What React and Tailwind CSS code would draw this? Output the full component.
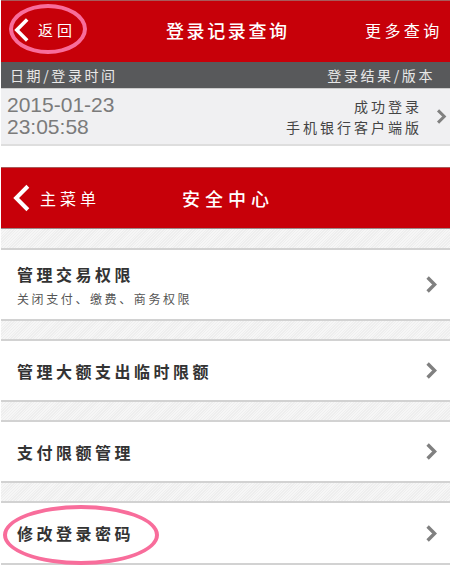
const stripe =
  "border-b-2 border-[#d2d2d2] bg-[repeating-linear-gradient(135deg,#f6f6f6_0px,#f6f6f6_1px,#eeeeee_1px,#eeeeee_2px)]";

function BackArrow({ className }) {
  return (
    <svg viewBox="0 0 20 30" className={className} fill="none" stroke="#fff" strokeWidth="4.5">
      <path d="M16.5 2 L3.5 15 L16.5 28" />
    </svg>
  );
}

function Arrow({ className }) {
  return (
    <svg viewBox="0 0 11 17" className={`w-[11px] shrink-0 ${className}`} fill="none" stroke="#808080" strokeWidth="3.4">
      <path d="M1.6 1.5 L8.6 8.5 L1.6 15.5" />
    </svg>
  );
}

function MenuRow({ title, sub, height }) {
  return (
    <div className={`${height} flex items-center justify-between pl-[16px] pr-[13px] bg-white border-b-2 border-[#d2d2d2]`}>
      <div>
        <p className="text-[16px] leading-[22px] font-bold tracking-[3.5px] text-[#333]">{title}</p>
        {sub && <p className="text-[12px] leading-[16px] mt-[6px] tracking-[2.6px] text-[#555]">{sub}</p>}
      </div>
      <Arrow className="h-[17px]" />
    </div>
  );
}

export default function App() {
  return (
    <div
      className="relative w-[450px] h-[566px] overflow-hidden bg-white pl-[1px]"
      style={{ fontFamily: '"Noto Sans CJK SC", "Liberation Sans", sans-serif' }}
    >
      <header className="h-[62px] pb-[3px] bg-[#c70009] border-t border-[#a85a5a] flex items-center text-white">
        <BackArrow className="w-[16px] h-[28px] ml-[13px] shrink-0" />
        <span className="ml-[8px] w-[52px] text-[15px] tracking-[4px] whitespace-nowrap">返回</span>
        <h1 className="ml-[76px] w-[132px] text-[18px] font-medium tracking-[2.6px] whitespace-nowrap">登录记录查询</h1>
        <span className="ml-[67px] text-[16px] tracking-[3.4px] whitespace-nowrap">更多查询</span>
      </header>

      <div className="h-[27px] bg-[#58595b] text-[#e8e8e8] text-[14px] tracking-[2.6px] flex items-center justify-between pl-[9px] pr-[15px] border-b border-[#ccc]">
        <span>日期/登录时间</span>
        <span>登录结果/版本</span>
      </div>

      <div className="h-[57px] bg-[#f0f0f2] border-b-2 border-[#dedede] flex items-center justify-between pl-[6px] pr-[3px]">
        <div className="text-[#7b7b7b] text-[21px] leading-[22px] -mt-[1px]" style={{ fontFamily: '"Liberation Sans", sans-serif' }}>
          <p>2015-01-23</p>
          <p>23:05:58</p>
        </div>
        <div className="flex items-center gap-[17px]">
          <div className="text-right text-[#444] text-[14px] leading-[21px] tracking-[3px] -mr-[3px]">
            <p>成功登录</p>
            <p>手机银行客户端版</p>
          </div>
          <Arrow className="h-[15px]" />
        </div>
      </div>

      <div className="h-[21px] bg-white" />

      <header className="h-[62px] bg-[#c70009] border-t border-[#a85a5a] border-b border-b-[#9a8a8a] flex items-center text-white">
        <BackArrow className="w-[18px] h-[30px] ml-[12px] shrink-0" />
        <span className="ml-[9px] w-[58px] text-[16px] tracking-[4px] whitespace-nowrap">主菜单</span>
        <h1 className="ml-[84px] text-[18px] font-medium tracking-[5px] whitespace-nowrap">安全中心</h1>
      </header>

      <div className={`h-[21px] ${stripe}`} />
      <MenuRow height="h-[71px]" title="管理交易权限" sub="关闭支付、缴费、商务权限" />
      <div className={`h-[20px] ${stripe}`} />
      <MenuRow height="h-[61px]" title="管理大额支出临时限额" />
      <div className={`h-[20px] ${stripe}`} />
      <MenuRow height="h-[61px]" title="支付限额管理" />
      <div className={`h-[20px] ${stripe}`} />
      <MenuRow height="h-[62px]" title="修改登录密码" />

      {/* pink hand-drawn highlights over the back button and the last row */}
      <div className="absolute left-[9px] top-[4px] w-[78px] h-[50px] rounded-[50%] border-[4px] border-[#f86d9b]" />
      <div className="absolute left-[3px] top-[505px] w-[156px] h-[60px] rounded-[50%] border-[4px] border-[#f86d9b]" />
    </div>
  );
}
